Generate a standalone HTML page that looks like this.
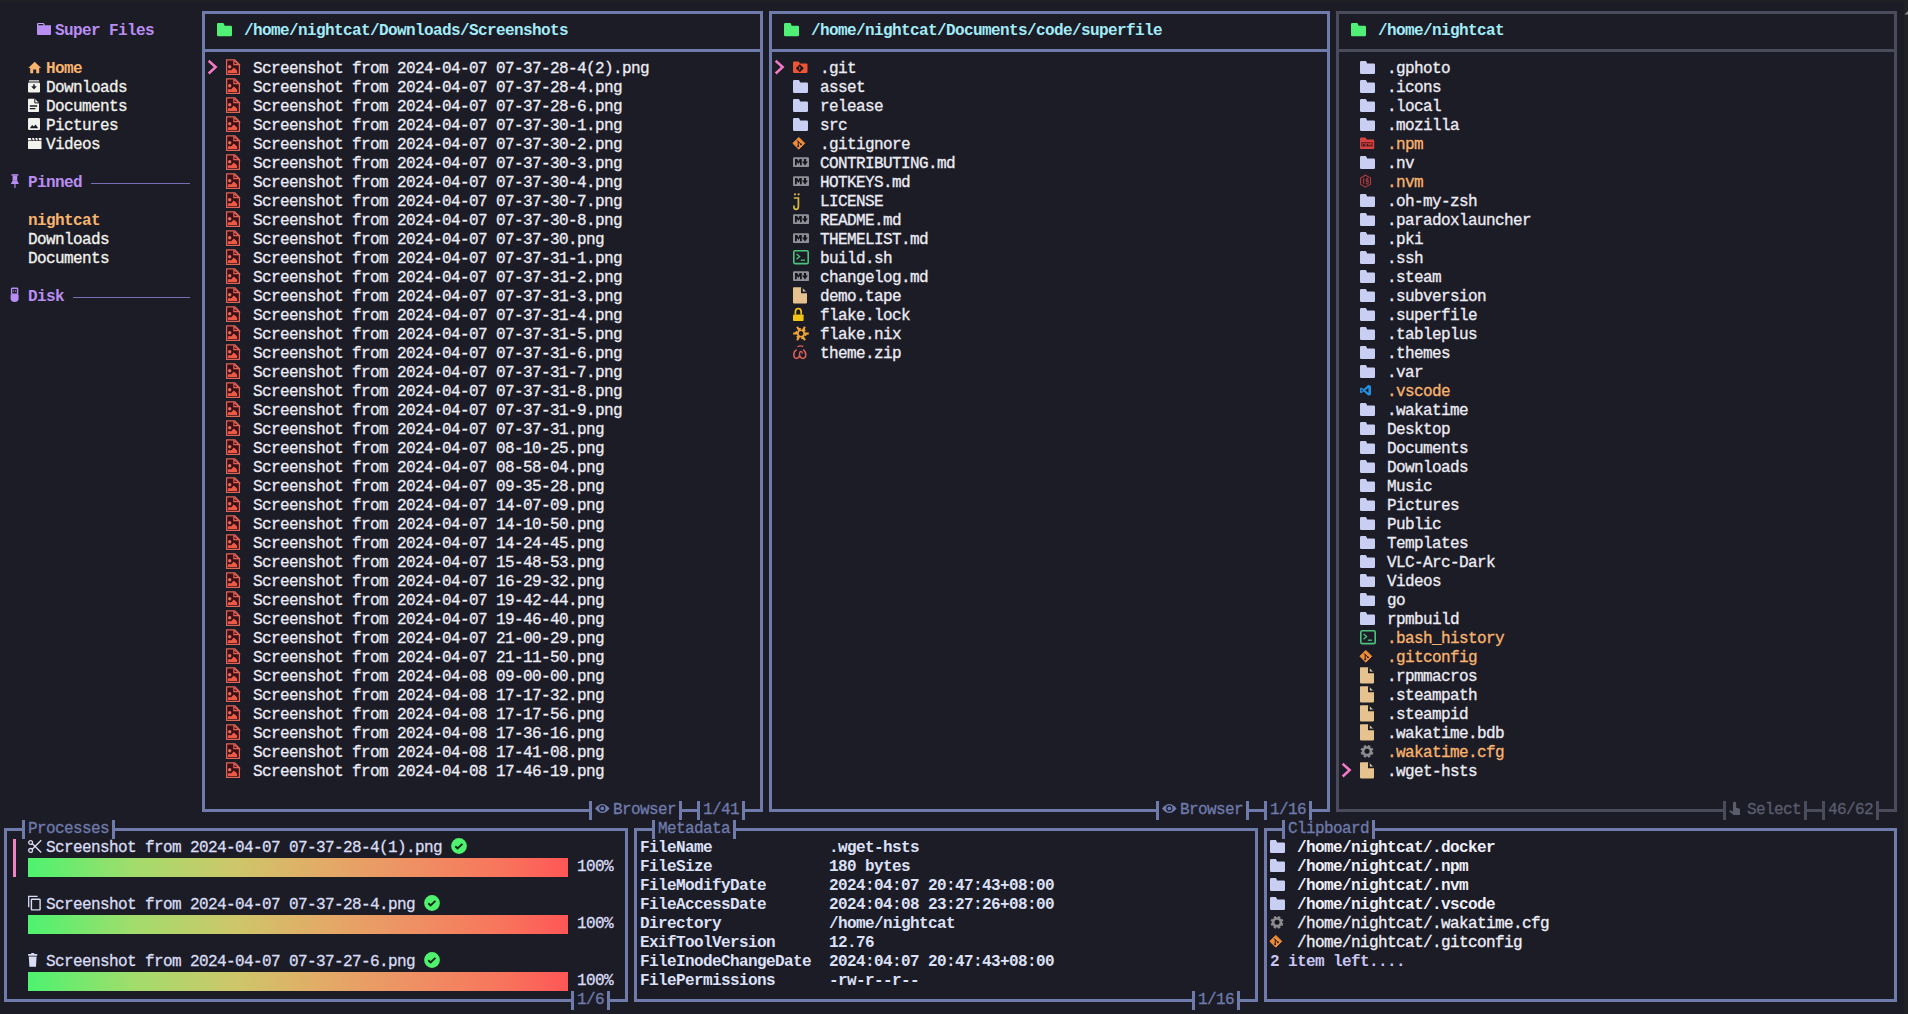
<!DOCTYPE html>
<html><head><meta charset="utf-8"><style>
html,body{margin:0;padding:0;}
body{width:1908px;height:1014px;background:#1c1c27;position:relative;overflow:hidden;}
.r{position:absolute;}
.t{position:absolute;white-space:pre;font-family:"Liberation Mono",monospace;font-size:16px;line-height:19px;letter-spacing:-0.6px;-webkit-text-stroke:0.3px currentColor;}
.i{position:absolute;overflow:visible;}
</style></head><body>
<div class="r" style="left:0px;top:0px;width:1908px;height:2px;background:#202024;"></div>
<div class="r" style="left:1904px;top:0px;width:4px;height:1014px;background:#202124;"></div>
<svg class="i" style="left:1904px;top:10px" width="4" height="5" viewBox="0 0 4 5"><path d="M0.5 4.5 L4 1 V4.5 Z" fill="#8a8a8a"/></svg>
<svg class="i" style="left:37px;top:22px" width="18" height="19" viewBox="0 0 18 19"><rect x="0.6" y="1.5" width="6.4" height="3" rx="1" fill="none" stroke="#c9a8f6" stroke-width="1.2"/><path d="M0 3.2 H14 V12.1 Q14 13.1 13 13.1 H1 Q0 13.1 0 12.1 Z" fill="#b98ef2"/></svg>
<div class="t" style="left:55px;top:22px;color:#b98ef2;font-weight:bold;-webkit-text-stroke:0;">Super Files</div>
<svg class="i" style="left:28px;top:60px" width="18" height="19" viewBox="0 0 18 19"><path d="M0.3 7.9 L6.7 1.8 L13.1 7.9 H11.2 V13.2 H8.2 V9.6 H5.2 V13.2 H2.2 V7.9 Z" fill="#f8b46e"/></svg>
<div class="t" style="left:46px;top:60px;color:#f8b46e;font-weight:bold;-webkit-text-stroke:0;">Home</div>
<svg class="i" style="left:28px;top:79px" width="18" height="19" viewBox="0 0 18 19"><rect x="0.8" y="1.3" width="10.4" height="1.3" rx="0.5" fill="#f2f2ec"/><rect x="0" y="3.4" width="12" height="10.2" rx="1.3" fill="#f2f2ec"/><path d="M3.2 7.2 H8.8 L6 10.6 Z" fill="#1b1b25"/><rect x="5.2" y="5.4" width="1.6" height="2.2" fill="#1b1b25"/></svg>
<div class="t" style="left:46px;top:79px;color:#f2f2ec;">Downloads</div>
<svg class="i" style="left:28px;top:98px" width="18" height="19" viewBox="0 0 18 19"><path d="M0 1.5 Q0 0.7 0.8 0.7 H6.8 L11 4.9 V13.2 Q11 14 10.2 14 H0.8 Q0 14 0 13.2 Z" fill="#f2f2ec"/><path d="M6.8 0.7 V4.9 H11" fill="none" stroke="#1b1b25" stroke-width="1"/><path d="M1.8 8 H9.2 M1.8 10.6 H7.4" stroke="#1b1b25" stroke-width="1.3"/></svg>
<div class="t" style="left:46px;top:98px;color:#f2f2ec;">Documents</div>
<svg class="i" style="left:28px;top:117px" width="18" height="19" viewBox="0 0 18 19"><rect x="0" y="1.1" width="12" height="11.9" rx="1.3" fill="#f2f2ec"/><path d="M1.8 11.2 L4.2 8 L5.8 9.6 L7.6 7.4 L10.2 11.2 Z" fill="#1b1b25"/></svg>
<div class="t" style="left:46px;top:117px;color:#f2f2ec;">Pictures</div>
<svg class="i" style="left:28px;top:136px" width="18" height="19" viewBox="0 0 18 19"><rect x="0" y="5" width="13.5" height="7.9" rx="0.6" fill="#f2f2ec"/><rect x="0" y="2" width="13.5" height="2.4" fill="#f2f2ec"/><path d="M3.2 1.6 L4.4 4.8 M6.4 1.6 L7.6 4.8 M9.6 1.6 L10.8 4.8" stroke="#1b1b25" stroke-width="1.1"/></svg>
<div class="t" style="left:46px;top:136px;color:#f2f2ec;">Videos</div>
<svg class="i" style="left:10px;top:174px" width="18" height="19" viewBox="0 0 18 19"><rect x="1.5" y="0.2" width="6.8" height="1.5" fill="#b98ef2"/><rect x="2.6" y="1.6" width="4.6" height="5" fill="#b98ef2"/><path d="M2.6 6.4 H7.2 L8.9 9.9 H0.9 Z" fill="#b98ef2"/><rect x="4.4" y="9.8" width="1.1" height="4.2" fill="#b98ef2"/></svg>
<div class="t" style="left:28px;top:174px;color:#b98ef2;font-weight:bold;-webkit-text-stroke:0;">Pinned</div>
<div class="r" style="left:91px;top:183px;width:99px;height:1px;background:#7a6db5;"></div>
<div class="t" style="left:28px;top:212px;color:#f8b46e;font-weight:bold;-webkit-text-stroke:0;">nightcat</div>
<div class="t" style="left:28px;top:231px;color:#f2f2ec;">Downloads</div>
<div class="t" style="left:28px;top:250px;color:#f2f2ec;">Documents</div>
<svg class="i" style="left:10px;top:288px" width="18" height="19" viewBox="0 0 18 19"><rect x="1.6" y="0.2" width="6" height="6" rx="0.6" fill="none" stroke="#b98ef2" stroke-width="1.4"/><rect x="3" y="2.4" width="1.2" height="1.2" fill="#b98ef2"/><rect x="5" y="2.4" width="1.2" height="1.2" fill="#b98ef2"/><path d="M0.6 6.4 H8.6 V10.6 Q8.6 14 4.6 14 Q0.6 14 0.6 10.6 Z" fill="#b98ef2"/></svg>
<div class="t" style="left:28px;top:288px;color:#b98ef2;font-weight:bold;-webkit-text-stroke:0;">Disk</div>
<div class="r" style="left:73px;top:297px;width:117px;height:1px;background:#7a6db5;"></div>
<div class="r" style="left:202px;top:11px;width:561px;height:3px;background:#6f7bab;"></div>
<div class="r" style="left:202px;top:809px;width:561px;height:3px;background:#6f7bab;"></div>
<div class="r" style="left:202px;top:11px;width:3px;height:801px;background:#6f7bab;"></div>
<div class="r" style="left:760px;top:11px;width:3px;height:801px;background:#6f7bab;"></div>
<div class="r" style="left:202px;top:49px;width:561px;height:3px;background:#6f7bab;"></div>
<svg class="i" style="left:217px;top:22px" width="18" height="19" viewBox="0 0 18 19"><path d="M0 2.2 Q0 1.0 1.2 1.0 H6.2 Q7.0 1.0 7.6 3.7 H13.8 Q15.0 3.7 15.0 4.9 V13.0 Q15.0 14.2 13.8 14.2 H1.2 Q0 14.2 0 13.0 Z" fill="#4ff075"/></svg>
<div class="t" style="left:244px;top:22px;color:#a3ecf7;font-weight:bold;-webkit-text-stroke:0;">/home/nightcat/Downloads/Screenshots</div>
<svg class="i" style="left:208px;top:60px" width="18" height="19" viewBox="0 0 18 19"><path d="M1.6 1.6 L7.6 7.1 L1.6 12.6" fill="none" stroke="#f478c4" stroke-width="2.6" stroke-linecap="square" stroke-linejoin="miter"/></svg>
<svg class="i" style="left:226px;top:60px" width="18" height="19" viewBox="0 0 18 19"><path d="M0.6 -0.2 H8.9 L13.4 4.6 V14.4 H0.6 Z" fill="#3a1016" stroke="#de6457" stroke-width="1.25" stroke-linejoin="miter"/><path d="M7.8 0.8 V4.6 H13.2 Z" fill="#5c0a0c" stroke="#de6457" stroke-width="1.1"/><circle cx="3.7" cy="6.7" r="1.7" fill="#e0705f"/><path d="M1.8 13.1 V10.4 L3.6 10.0 L5 10.6 L7.8 7.6 L11.1 10.6 V13.1 Z" fill="#ec5a45"/></svg>
<div class="t" style="left:253px;top:60px;color:#ececf4;">Screenshot from 2024-04-07 07-37-28-4(2).png</div>
<svg class="i" style="left:226px;top:79px" width="18" height="19" viewBox="0 0 18 19"><path d="M0.6 -0.2 H8.9 L13.4 4.6 V14.4 H0.6 Z" fill="#3a1016" stroke="#de6457" stroke-width="1.25" stroke-linejoin="miter"/><path d="M7.8 0.8 V4.6 H13.2 Z" fill="#5c0a0c" stroke="#de6457" stroke-width="1.1"/><circle cx="3.7" cy="6.7" r="1.7" fill="#e0705f"/><path d="M1.8 13.1 V10.4 L3.6 10.0 L5 10.6 L7.8 7.6 L11.1 10.6 V13.1 Z" fill="#ec5a45"/></svg>
<div class="t" style="left:253px;top:79px;color:#ececf4;">Screenshot from 2024-04-07 07-37-28-4.png</div>
<svg class="i" style="left:226px;top:98px" width="18" height="19" viewBox="0 0 18 19"><path d="M0.6 -0.2 H8.9 L13.4 4.6 V14.4 H0.6 Z" fill="#3a1016" stroke="#de6457" stroke-width="1.25" stroke-linejoin="miter"/><path d="M7.8 0.8 V4.6 H13.2 Z" fill="#5c0a0c" stroke="#de6457" stroke-width="1.1"/><circle cx="3.7" cy="6.7" r="1.7" fill="#e0705f"/><path d="M1.8 13.1 V10.4 L3.6 10.0 L5 10.6 L7.8 7.6 L11.1 10.6 V13.1 Z" fill="#ec5a45"/></svg>
<div class="t" style="left:253px;top:98px;color:#ececf4;">Screenshot from 2024-04-07 07-37-28-6.png</div>
<svg class="i" style="left:226px;top:117px" width="18" height="19" viewBox="0 0 18 19"><path d="M0.6 -0.2 H8.9 L13.4 4.6 V14.4 H0.6 Z" fill="#3a1016" stroke="#de6457" stroke-width="1.25" stroke-linejoin="miter"/><path d="M7.8 0.8 V4.6 H13.2 Z" fill="#5c0a0c" stroke="#de6457" stroke-width="1.1"/><circle cx="3.7" cy="6.7" r="1.7" fill="#e0705f"/><path d="M1.8 13.1 V10.4 L3.6 10.0 L5 10.6 L7.8 7.6 L11.1 10.6 V13.1 Z" fill="#ec5a45"/></svg>
<div class="t" style="left:253px;top:117px;color:#ececf4;">Screenshot from 2024-04-07 07-37-30-1.png</div>
<svg class="i" style="left:226px;top:136px" width="18" height="19" viewBox="0 0 18 19"><path d="M0.6 -0.2 H8.9 L13.4 4.6 V14.4 H0.6 Z" fill="#3a1016" stroke="#de6457" stroke-width="1.25" stroke-linejoin="miter"/><path d="M7.8 0.8 V4.6 H13.2 Z" fill="#5c0a0c" stroke="#de6457" stroke-width="1.1"/><circle cx="3.7" cy="6.7" r="1.7" fill="#e0705f"/><path d="M1.8 13.1 V10.4 L3.6 10.0 L5 10.6 L7.8 7.6 L11.1 10.6 V13.1 Z" fill="#ec5a45"/></svg>
<div class="t" style="left:253px;top:136px;color:#ececf4;">Screenshot from 2024-04-07 07-37-30-2.png</div>
<svg class="i" style="left:226px;top:155px" width="18" height="19" viewBox="0 0 18 19"><path d="M0.6 -0.2 H8.9 L13.4 4.6 V14.4 H0.6 Z" fill="#3a1016" stroke="#de6457" stroke-width="1.25" stroke-linejoin="miter"/><path d="M7.8 0.8 V4.6 H13.2 Z" fill="#5c0a0c" stroke="#de6457" stroke-width="1.1"/><circle cx="3.7" cy="6.7" r="1.7" fill="#e0705f"/><path d="M1.8 13.1 V10.4 L3.6 10.0 L5 10.6 L7.8 7.6 L11.1 10.6 V13.1 Z" fill="#ec5a45"/></svg>
<div class="t" style="left:253px;top:155px;color:#ececf4;">Screenshot from 2024-04-07 07-37-30-3.png</div>
<svg class="i" style="left:226px;top:174px" width="18" height="19" viewBox="0 0 18 19"><path d="M0.6 -0.2 H8.9 L13.4 4.6 V14.4 H0.6 Z" fill="#3a1016" stroke="#de6457" stroke-width="1.25" stroke-linejoin="miter"/><path d="M7.8 0.8 V4.6 H13.2 Z" fill="#5c0a0c" stroke="#de6457" stroke-width="1.1"/><circle cx="3.7" cy="6.7" r="1.7" fill="#e0705f"/><path d="M1.8 13.1 V10.4 L3.6 10.0 L5 10.6 L7.8 7.6 L11.1 10.6 V13.1 Z" fill="#ec5a45"/></svg>
<div class="t" style="left:253px;top:174px;color:#ececf4;">Screenshot from 2024-04-07 07-37-30-4.png</div>
<svg class="i" style="left:226px;top:193px" width="18" height="19" viewBox="0 0 18 19"><path d="M0.6 -0.2 H8.9 L13.4 4.6 V14.4 H0.6 Z" fill="#3a1016" stroke="#de6457" stroke-width="1.25" stroke-linejoin="miter"/><path d="M7.8 0.8 V4.6 H13.2 Z" fill="#5c0a0c" stroke="#de6457" stroke-width="1.1"/><circle cx="3.7" cy="6.7" r="1.7" fill="#e0705f"/><path d="M1.8 13.1 V10.4 L3.6 10.0 L5 10.6 L7.8 7.6 L11.1 10.6 V13.1 Z" fill="#ec5a45"/></svg>
<div class="t" style="left:253px;top:193px;color:#ececf4;">Screenshot from 2024-04-07 07-37-30-7.png</div>
<svg class="i" style="left:226px;top:212px" width="18" height="19" viewBox="0 0 18 19"><path d="M0.6 -0.2 H8.9 L13.4 4.6 V14.4 H0.6 Z" fill="#3a1016" stroke="#de6457" stroke-width="1.25" stroke-linejoin="miter"/><path d="M7.8 0.8 V4.6 H13.2 Z" fill="#5c0a0c" stroke="#de6457" stroke-width="1.1"/><circle cx="3.7" cy="6.7" r="1.7" fill="#e0705f"/><path d="M1.8 13.1 V10.4 L3.6 10.0 L5 10.6 L7.8 7.6 L11.1 10.6 V13.1 Z" fill="#ec5a45"/></svg>
<div class="t" style="left:253px;top:212px;color:#ececf4;">Screenshot from 2024-04-07 07-37-30-8.png</div>
<svg class="i" style="left:226px;top:231px" width="18" height="19" viewBox="0 0 18 19"><path d="M0.6 -0.2 H8.9 L13.4 4.6 V14.4 H0.6 Z" fill="#3a1016" stroke="#de6457" stroke-width="1.25" stroke-linejoin="miter"/><path d="M7.8 0.8 V4.6 H13.2 Z" fill="#5c0a0c" stroke="#de6457" stroke-width="1.1"/><circle cx="3.7" cy="6.7" r="1.7" fill="#e0705f"/><path d="M1.8 13.1 V10.4 L3.6 10.0 L5 10.6 L7.8 7.6 L11.1 10.6 V13.1 Z" fill="#ec5a45"/></svg>
<div class="t" style="left:253px;top:231px;color:#ececf4;">Screenshot from 2024-04-07 07-37-30.png</div>
<svg class="i" style="left:226px;top:250px" width="18" height="19" viewBox="0 0 18 19"><path d="M0.6 -0.2 H8.9 L13.4 4.6 V14.4 H0.6 Z" fill="#3a1016" stroke="#de6457" stroke-width="1.25" stroke-linejoin="miter"/><path d="M7.8 0.8 V4.6 H13.2 Z" fill="#5c0a0c" stroke="#de6457" stroke-width="1.1"/><circle cx="3.7" cy="6.7" r="1.7" fill="#e0705f"/><path d="M1.8 13.1 V10.4 L3.6 10.0 L5 10.6 L7.8 7.6 L11.1 10.6 V13.1 Z" fill="#ec5a45"/></svg>
<div class="t" style="left:253px;top:250px;color:#ececf4;">Screenshot from 2024-04-07 07-37-31-1.png</div>
<svg class="i" style="left:226px;top:269px" width="18" height="19" viewBox="0 0 18 19"><path d="M0.6 -0.2 H8.9 L13.4 4.6 V14.4 H0.6 Z" fill="#3a1016" stroke="#de6457" stroke-width="1.25" stroke-linejoin="miter"/><path d="M7.8 0.8 V4.6 H13.2 Z" fill="#5c0a0c" stroke="#de6457" stroke-width="1.1"/><circle cx="3.7" cy="6.7" r="1.7" fill="#e0705f"/><path d="M1.8 13.1 V10.4 L3.6 10.0 L5 10.6 L7.8 7.6 L11.1 10.6 V13.1 Z" fill="#ec5a45"/></svg>
<div class="t" style="left:253px;top:269px;color:#ececf4;">Screenshot from 2024-04-07 07-37-31-2.png</div>
<svg class="i" style="left:226px;top:288px" width="18" height="19" viewBox="0 0 18 19"><path d="M0.6 -0.2 H8.9 L13.4 4.6 V14.4 H0.6 Z" fill="#3a1016" stroke="#de6457" stroke-width="1.25" stroke-linejoin="miter"/><path d="M7.8 0.8 V4.6 H13.2 Z" fill="#5c0a0c" stroke="#de6457" stroke-width="1.1"/><circle cx="3.7" cy="6.7" r="1.7" fill="#e0705f"/><path d="M1.8 13.1 V10.4 L3.6 10.0 L5 10.6 L7.8 7.6 L11.1 10.6 V13.1 Z" fill="#ec5a45"/></svg>
<div class="t" style="left:253px;top:288px;color:#ececf4;">Screenshot from 2024-04-07 07-37-31-3.png</div>
<svg class="i" style="left:226px;top:307px" width="18" height="19" viewBox="0 0 18 19"><path d="M0.6 -0.2 H8.9 L13.4 4.6 V14.4 H0.6 Z" fill="#3a1016" stroke="#de6457" stroke-width="1.25" stroke-linejoin="miter"/><path d="M7.8 0.8 V4.6 H13.2 Z" fill="#5c0a0c" stroke="#de6457" stroke-width="1.1"/><circle cx="3.7" cy="6.7" r="1.7" fill="#e0705f"/><path d="M1.8 13.1 V10.4 L3.6 10.0 L5 10.6 L7.8 7.6 L11.1 10.6 V13.1 Z" fill="#ec5a45"/></svg>
<div class="t" style="left:253px;top:307px;color:#ececf4;">Screenshot from 2024-04-07 07-37-31-4.png</div>
<svg class="i" style="left:226px;top:326px" width="18" height="19" viewBox="0 0 18 19"><path d="M0.6 -0.2 H8.9 L13.4 4.6 V14.4 H0.6 Z" fill="#3a1016" stroke="#de6457" stroke-width="1.25" stroke-linejoin="miter"/><path d="M7.8 0.8 V4.6 H13.2 Z" fill="#5c0a0c" stroke="#de6457" stroke-width="1.1"/><circle cx="3.7" cy="6.7" r="1.7" fill="#e0705f"/><path d="M1.8 13.1 V10.4 L3.6 10.0 L5 10.6 L7.8 7.6 L11.1 10.6 V13.1 Z" fill="#ec5a45"/></svg>
<div class="t" style="left:253px;top:326px;color:#ececf4;">Screenshot from 2024-04-07 07-37-31-5.png</div>
<svg class="i" style="left:226px;top:345px" width="18" height="19" viewBox="0 0 18 19"><path d="M0.6 -0.2 H8.9 L13.4 4.6 V14.4 H0.6 Z" fill="#3a1016" stroke="#de6457" stroke-width="1.25" stroke-linejoin="miter"/><path d="M7.8 0.8 V4.6 H13.2 Z" fill="#5c0a0c" stroke="#de6457" stroke-width="1.1"/><circle cx="3.7" cy="6.7" r="1.7" fill="#e0705f"/><path d="M1.8 13.1 V10.4 L3.6 10.0 L5 10.6 L7.8 7.6 L11.1 10.6 V13.1 Z" fill="#ec5a45"/></svg>
<div class="t" style="left:253px;top:345px;color:#ececf4;">Screenshot from 2024-04-07 07-37-31-6.png</div>
<svg class="i" style="left:226px;top:364px" width="18" height="19" viewBox="0 0 18 19"><path d="M0.6 -0.2 H8.9 L13.4 4.6 V14.4 H0.6 Z" fill="#3a1016" stroke="#de6457" stroke-width="1.25" stroke-linejoin="miter"/><path d="M7.8 0.8 V4.6 H13.2 Z" fill="#5c0a0c" stroke="#de6457" stroke-width="1.1"/><circle cx="3.7" cy="6.7" r="1.7" fill="#e0705f"/><path d="M1.8 13.1 V10.4 L3.6 10.0 L5 10.6 L7.8 7.6 L11.1 10.6 V13.1 Z" fill="#ec5a45"/></svg>
<div class="t" style="left:253px;top:364px;color:#ececf4;">Screenshot from 2024-04-07 07-37-31-7.png</div>
<svg class="i" style="left:226px;top:383px" width="18" height="19" viewBox="0 0 18 19"><path d="M0.6 -0.2 H8.9 L13.4 4.6 V14.4 H0.6 Z" fill="#3a1016" stroke="#de6457" stroke-width="1.25" stroke-linejoin="miter"/><path d="M7.8 0.8 V4.6 H13.2 Z" fill="#5c0a0c" stroke="#de6457" stroke-width="1.1"/><circle cx="3.7" cy="6.7" r="1.7" fill="#e0705f"/><path d="M1.8 13.1 V10.4 L3.6 10.0 L5 10.6 L7.8 7.6 L11.1 10.6 V13.1 Z" fill="#ec5a45"/></svg>
<div class="t" style="left:253px;top:383px;color:#ececf4;">Screenshot from 2024-04-07 07-37-31-8.png</div>
<svg class="i" style="left:226px;top:402px" width="18" height="19" viewBox="0 0 18 19"><path d="M0.6 -0.2 H8.9 L13.4 4.6 V14.4 H0.6 Z" fill="#3a1016" stroke="#de6457" stroke-width="1.25" stroke-linejoin="miter"/><path d="M7.8 0.8 V4.6 H13.2 Z" fill="#5c0a0c" stroke="#de6457" stroke-width="1.1"/><circle cx="3.7" cy="6.7" r="1.7" fill="#e0705f"/><path d="M1.8 13.1 V10.4 L3.6 10.0 L5 10.6 L7.8 7.6 L11.1 10.6 V13.1 Z" fill="#ec5a45"/></svg>
<div class="t" style="left:253px;top:402px;color:#ececf4;">Screenshot from 2024-04-07 07-37-31-9.png</div>
<svg class="i" style="left:226px;top:421px" width="18" height="19" viewBox="0 0 18 19"><path d="M0.6 -0.2 H8.9 L13.4 4.6 V14.4 H0.6 Z" fill="#3a1016" stroke="#de6457" stroke-width="1.25" stroke-linejoin="miter"/><path d="M7.8 0.8 V4.6 H13.2 Z" fill="#5c0a0c" stroke="#de6457" stroke-width="1.1"/><circle cx="3.7" cy="6.7" r="1.7" fill="#e0705f"/><path d="M1.8 13.1 V10.4 L3.6 10.0 L5 10.6 L7.8 7.6 L11.1 10.6 V13.1 Z" fill="#ec5a45"/></svg>
<div class="t" style="left:253px;top:421px;color:#ececf4;">Screenshot from 2024-04-07 07-37-31.png</div>
<svg class="i" style="left:226px;top:440px" width="18" height="19" viewBox="0 0 18 19"><path d="M0.6 -0.2 H8.9 L13.4 4.6 V14.4 H0.6 Z" fill="#3a1016" stroke="#de6457" stroke-width="1.25" stroke-linejoin="miter"/><path d="M7.8 0.8 V4.6 H13.2 Z" fill="#5c0a0c" stroke="#de6457" stroke-width="1.1"/><circle cx="3.7" cy="6.7" r="1.7" fill="#e0705f"/><path d="M1.8 13.1 V10.4 L3.6 10.0 L5 10.6 L7.8 7.6 L11.1 10.6 V13.1 Z" fill="#ec5a45"/></svg>
<div class="t" style="left:253px;top:440px;color:#ececf4;">Screenshot from 2024-04-07 08-10-25.png</div>
<svg class="i" style="left:226px;top:459px" width="18" height="19" viewBox="0 0 18 19"><path d="M0.6 -0.2 H8.9 L13.4 4.6 V14.4 H0.6 Z" fill="#3a1016" stroke="#de6457" stroke-width="1.25" stroke-linejoin="miter"/><path d="M7.8 0.8 V4.6 H13.2 Z" fill="#5c0a0c" stroke="#de6457" stroke-width="1.1"/><circle cx="3.7" cy="6.7" r="1.7" fill="#e0705f"/><path d="M1.8 13.1 V10.4 L3.6 10.0 L5 10.6 L7.8 7.6 L11.1 10.6 V13.1 Z" fill="#ec5a45"/></svg>
<div class="t" style="left:253px;top:459px;color:#ececf4;">Screenshot from 2024-04-07 08-58-04.png</div>
<svg class="i" style="left:226px;top:478px" width="18" height="19" viewBox="0 0 18 19"><path d="M0.6 -0.2 H8.9 L13.4 4.6 V14.4 H0.6 Z" fill="#3a1016" stroke="#de6457" stroke-width="1.25" stroke-linejoin="miter"/><path d="M7.8 0.8 V4.6 H13.2 Z" fill="#5c0a0c" stroke="#de6457" stroke-width="1.1"/><circle cx="3.7" cy="6.7" r="1.7" fill="#e0705f"/><path d="M1.8 13.1 V10.4 L3.6 10.0 L5 10.6 L7.8 7.6 L11.1 10.6 V13.1 Z" fill="#ec5a45"/></svg>
<div class="t" style="left:253px;top:478px;color:#ececf4;">Screenshot from 2024-04-07 09-35-28.png</div>
<svg class="i" style="left:226px;top:497px" width="18" height="19" viewBox="0 0 18 19"><path d="M0.6 -0.2 H8.9 L13.4 4.6 V14.4 H0.6 Z" fill="#3a1016" stroke="#de6457" stroke-width="1.25" stroke-linejoin="miter"/><path d="M7.8 0.8 V4.6 H13.2 Z" fill="#5c0a0c" stroke="#de6457" stroke-width="1.1"/><circle cx="3.7" cy="6.7" r="1.7" fill="#e0705f"/><path d="M1.8 13.1 V10.4 L3.6 10.0 L5 10.6 L7.8 7.6 L11.1 10.6 V13.1 Z" fill="#ec5a45"/></svg>
<div class="t" style="left:253px;top:497px;color:#ececf4;">Screenshot from 2024-04-07 14-07-09.png</div>
<svg class="i" style="left:226px;top:516px" width="18" height="19" viewBox="0 0 18 19"><path d="M0.6 -0.2 H8.9 L13.4 4.6 V14.4 H0.6 Z" fill="#3a1016" stroke="#de6457" stroke-width="1.25" stroke-linejoin="miter"/><path d="M7.8 0.8 V4.6 H13.2 Z" fill="#5c0a0c" stroke="#de6457" stroke-width="1.1"/><circle cx="3.7" cy="6.7" r="1.7" fill="#e0705f"/><path d="M1.8 13.1 V10.4 L3.6 10.0 L5 10.6 L7.8 7.6 L11.1 10.6 V13.1 Z" fill="#ec5a45"/></svg>
<div class="t" style="left:253px;top:516px;color:#ececf4;">Screenshot from 2024-04-07 14-10-50.png</div>
<svg class="i" style="left:226px;top:535px" width="18" height="19" viewBox="0 0 18 19"><path d="M0.6 -0.2 H8.9 L13.4 4.6 V14.4 H0.6 Z" fill="#3a1016" stroke="#de6457" stroke-width="1.25" stroke-linejoin="miter"/><path d="M7.8 0.8 V4.6 H13.2 Z" fill="#5c0a0c" stroke="#de6457" stroke-width="1.1"/><circle cx="3.7" cy="6.7" r="1.7" fill="#e0705f"/><path d="M1.8 13.1 V10.4 L3.6 10.0 L5 10.6 L7.8 7.6 L11.1 10.6 V13.1 Z" fill="#ec5a45"/></svg>
<div class="t" style="left:253px;top:535px;color:#ececf4;">Screenshot from 2024-04-07 14-24-45.png</div>
<svg class="i" style="left:226px;top:554px" width="18" height="19" viewBox="0 0 18 19"><path d="M0.6 -0.2 H8.9 L13.4 4.6 V14.4 H0.6 Z" fill="#3a1016" stroke="#de6457" stroke-width="1.25" stroke-linejoin="miter"/><path d="M7.8 0.8 V4.6 H13.2 Z" fill="#5c0a0c" stroke="#de6457" stroke-width="1.1"/><circle cx="3.7" cy="6.7" r="1.7" fill="#e0705f"/><path d="M1.8 13.1 V10.4 L3.6 10.0 L5 10.6 L7.8 7.6 L11.1 10.6 V13.1 Z" fill="#ec5a45"/></svg>
<div class="t" style="left:253px;top:554px;color:#ececf4;">Screenshot from 2024-04-07 15-48-53.png</div>
<svg class="i" style="left:226px;top:573px" width="18" height="19" viewBox="0 0 18 19"><path d="M0.6 -0.2 H8.9 L13.4 4.6 V14.4 H0.6 Z" fill="#3a1016" stroke="#de6457" stroke-width="1.25" stroke-linejoin="miter"/><path d="M7.8 0.8 V4.6 H13.2 Z" fill="#5c0a0c" stroke="#de6457" stroke-width="1.1"/><circle cx="3.7" cy="6.7" r="1.7" fill="#e0705f"/><path d="M1.8 13.1 V10.4 L3.6 10.0 L5 10.6 L7.8 7.6 L11.1 10.6 V13.1 Z" fill="#ec5a45"/></svg>
<div class="t" style="left:253px;top:573px;color:#ececf4;">Screenshot from 2024-04-07 16-29-32.png</div>
<svg class="i" style="left:226px;top:592px" width="18" height="19" viewBox="0 0 18 19"><path d="M0.6 -0.2 H8.9 L13.4 4.6 V14.4 H0.6 Z" fill="#3a1016" stroke="#de6457" stroke-width="1.25" stroke-linejoin="miter"/><path d="M7.8 0.8 V4.6 H13.2 Z" fill="#5c0a0c" stroke="#de6457" stroke-width="1.1"/><circle cx="3.7" cy="6.7" r="1.7" fill="#e0705f"/><path d="M1.8 13.1 V10.4 L3.6 10.0 L5 10.6 L7.8 7.6 L11.1 10.6 V13.1 Z" fill="#ec5a45"/></svg>
<div class="t" style="left:253px;top:592px;color:#ececf4;">Screenshot from 2024-04-07 19-42-44.png</div>
<svg class="i" style="left:226px;top:611px" width="18" height="19" viewBox="0 0 18 19"><path d="M0.6 -0.2 H8.9 L13.4 4.6 V14.4 H0.6 Z" fill="#3a1016" stroke="#de6457" stroke-width="1.25" stroke-linejoin="miter"/><path d="M7.8 0.8 V4.6 H13.2 Z" fill="#5c0a0c" stroke="#de6457" stroke-width="1.1"/><circle cx="3.7" cy="6.7" r="1.7" fill="#e0705f"/><path d="M1.8 13.1 V10.4 L3.6 10.0 L5 10.6 L7.8 7.6 L11.1 10.6 V13.1 Z" fill="#ec5a45"/></svg>
<div class="t" style="left:253px;top:611px;color:#ececf4;">Screenshot from 2024-04-07 19-46-40.png</div>
<svg class="i" style="left:226px;top:630px" width="18" height="19" viewBox="0 0 18 19"><path d="M0.6 -0.2 H8.9 L13.4 4.6 V14.4 H0.6 Z" fill="#3a1016" stroke="#de6457" stroke-width="1.25" stroke-linejoin="miter"/><path d="M7.8 0.8 V4.6 H13.2 Z" fill="#5c0a0c" stroke="#de6457" stroke-width="1.1"/><circle cx="3.7" cy="6.7" r="1.7" fill="#e0705f"/><path d="M1.8 13.1 V10.4 L3.6 10.0 L5 10.6 L7.8 7.6 L11.1 10.6 V13.1 Z" fill="#ec5a45"/></svg>
<div class="t" style="left:253px;top:630px;color:#ececf4;">Screenshot from 2024-04-07 21-00-29.png</div>
<svg class="i" style="left:226px;top:649px" width="18" height="19" viewBox="0 0 18 19"><path d="M0.6 -0.2 H8.9 L13.4 4.6 V14.4 H0.6 Z" fill="#3a1016" stroke="#de6457" stroke-width="1.25" stroke-linejoin="miter"/><path d="M7.8 0.8 V4.6 H13.2 Z" fill="#5c0a0c" stroke="#de6457" stroke-width="1.1"/><circle cx="3.7" cy="6.7" r="1.7" fill="#e0705f"/><path d="M1.8 13.1 V10.4 L3.6 10.0 L5 10.6 L7.8 7.6 L11.1 10.6 V13.1 Z" fill="#ec5a45"/></svg>
<div class="t" style="left:253px;top:649px;color:#ececf4;">Screenshot from 2024-04-07 21-11-50.png</div>
<svg class="i" style="left:226px;top:668px" width="18" height="19" viewBox="0 0 18 19"><path d="M0.6 -0.2 H8.9 L13.4 4.6 V14.4 H0.6 Z" fill="#3a1016" stroke="#de6457" stroke-width="1.25" stroke-linejoin="miter"/><path d="M7.8 0.8 V4.6 H13.2 Z" fill="#5c0a0c" stroke="#de6457" stroke-width="1.1"/><circle cx="3.7" cy="6.7" r="1.7" fill="#e0705f"/><path d="M1.8 13.1 V10.4 L3.6 10.0 L5 10.6 L7.8 7.6 L11.1 10.6 V13.1 Z" fill="#ec5a45"/></svg>
<div class="t" style="left:253px;top:668px;color:#ececf4;">Screenshot from 2024-04-08 09-00-00.png</div>
<svg class="i" style="left:226px;top:687px" width="18" height="19" viewBox="0 0 18 19"><path d="M0.6 -0.2 H8.9 L13.4 4.6 V14.4 H0.6 Z" fill="#3a1016" stroke="#de6457" stroke-width="1.25" stroke-linejoin="miter"/><path d="M7.8 0.8 V4.6 H13.2 Z" fill="#5c0a0c" stroke="#de6457" stroke-width="1.1"/><circle cx="3.7" cy="6.7" r="1.7" fill="#e0705f"/><path d="M1.8 13.1 V10.4 L3.6 10.0 L5 10.6 L7.8 7.6 L11.1 10.6 V13.1 Z" fill="#ec5a45"/></svg>
<div class="t" style="left:253px;top:687px;color:#ececf4;">Screenshot from 2024-04-08 17-17-32.png</div>
<svg class="i" style="left:226px;top:706px" width="18" height="19" viewBox="0 0 18 19"><path d="M0.6 -0.2 H8.9 L13.4 4.6 V14.4 H0.6 Z" fill="#3a1016" stroke="#de6457" stroke-width="1.25" stroke-linejoin="miter"/><path d="M7.8 0.8 V4.6 H13.2 Z" fill="#5c0a0c" stroke="#de6457" stroke-width="1.1"/><circle cx="3.7" cy="6.7" r="1.7" fill="#e0705f"/><path d="M1.8 13.1 V10.4 L3.6 10.0 L5 10.6 L7.8 7.6 L11.1 10.6 V13.1 Z" fill="#ec5a45"/></svg>
<div class="t" style="left:253px;top:706px;color:#ececf4;">Screenshot from 2024-04-08 17-17-56.png</div>
<svg class="i" style="left:226px;top:725px" width="18" height="19" viewBox="0 0 18 19"><path d="M0.6 -0.2 H8.9 L13.4 4.6 V14.4 H0.6 Z" fill="#3a1016" stroke="#de6457" stroke-width="1.25" stroke-linejoin="miter"/><path d="M7.8 0.8 V4.6 H13.2 Z" fill="#5c0a0c" stroke="#de6457" stroke-width="1.1"/><circle cx="3.7" cy="6.7" r="1.7" fill="#e0705f"/><path d="M1.8 13.1 V10.4 L3.6 10.0 L5 10.6 L7.8 7.6 L11.1 10.6 V13.1 Z" fill="#ec5a45"/></svg>
<div class="t" style="left:253px;top:725px;color:#ececf4;">Screenshot from 2024-04-08 17-36-16.png</div>
<svg class="i" style="left:226px;top:744px" width="18" height="19" viewBox="0 0 18 19"><path d="M0.6 -0.2 H8.9 L13.4 4.6 V14.4 H0.6 Z" fill="#3a1016" stroke="#de6457" stroke-width="1.25" stroke-linejoin="miter"/><path d="M7.8 0.8 V4.6 H13.2 Z" fill="#5c0a0c" stroke="#de6457" stroke-width="1.1"/><circle cx="3.7" cy="6.7" r="1.7" fill="#e0705f"/><path d="M1.8 13.1 V10.4 L3.6 10.0 L5 10.6 L7.8 7.6 L11.1 10.6 V13.1 Z" fill="#ec5a45"/></svg>
<div class="t" style="left:253px;top:744px;color:#ececf4;">Screenshot from 2024-04-08 17-41-08.png</div>
<svg class="i" style="left:226px;top:763px" width="18" height="19" viewBox="0 0 18 19"><path d="M0.6 -0.2 H8.9 L13.4 4.6 V14.4 H0.6 Z" fill="#3a1016" stroke="#de6457" stroke-width="1.25" stroke-linejoin="miter"/><path d="M7.8 0.8 V4.6 H13.2 Z" fill="#5c0a0c" stroke="#de6457" stroke-width="1.1"/><circle cx="3.7" cy="6.7" r="1.7" fill="#e0705f"/><path d="M1.8 13.1 V10.4 L3.6 10.0 L5 10.6 L7.8 7.6 L11.1 10.6 V13.1 Z" fill="#ec5a45"/></svg>
<div class="t" style="left:253px;top:763px;color:#ececf4;">Screenshot from 2024-04-08 17-46-19.png</div>
<div class="r" style="left:592px;top:808px;width:87px;height:5px;background:#1c1c27;"></div>
<div class="r" style="left:700px;top:808px;width:42px;height:5px;background:#1c1c27;"></div>
<div class="r" style="left:589px;top:801px;width:3px;height:19px;background:#6f7bab;"></div>
<div class="r" style="left:679px;top:801px;width:3px;height:19px;background:#6f7bab;"></div>
<div class="r" style="left:697px;top:801px;width:3px;height:19px;background:#6f7bab;"></div>
<div class="r" style="left:742px;top:801px;width:3px;height:19px;background:#6f7bab;"></div>
<div class="t" style="left:613px;top:801px;color:#6f7bab;">Browser</div>
<div class="t" style="left:703px;top:801px;color:#6f7bab;">1/41</div>
<svg class="i" style="left:595px;top:801px" width="18" height="19" viewBox="0 0 18 19"><path d="M0 7.4 Q7.3 -1.6 14.6 7.4 Q7.3 16.4 0 7.4 Z" fill="#6f7bab"/><circle cx="7.3" cy="7.4" r="3.1" fill="#15152a"/><circle cx="7.3" cy="7.4" r="1.9" fill="#6f7bab"/></svg>
<div class="r" style="left:769px;top:11px;width:561px;height:3px;background:#6f7bab;"></div>
<div class="r" style="left:769px;top:809px;width:561px;height:3px;background:#6f7bab;"></div>
<div class="r" style="left:769px;top:11px;width:3px;height:801px;background:#6f7bab;"></div>
<div class="r" style="left:1327px;top:11px;width:3px;height:801px;background:#6f7bab;"></div>
<div class="r" style="left:769px;top:49px;width:561px;height:3px;background:#6f7bab;"></div>
<svg class="i" style="left:784px;top:22px" width="18" height="19" viewBox="0 0 18 19"><path d="M0 2.2 Q0 1.0 1.2 1.0 H6.2 Q7.0 1.0 7.6 3.7 H13.8 Q15.0 3.7 15.0 4.9 V13.0 Q15.0 14.2 13.8 14.2 H1.2 Q0 14.2 0 13.0 Z" fill="#4ff075"/></svg>
<div class="t" style="left:811px;top:22px;color:#a3ecf7;font-weight:bold;-webkit-text-stroke:0;">/home/nightcat/Documents/code/superfile</div>
<svg class="i" style="left:775px;top:60px" width="18" height="19" viewBox="0 0 18 19"><path d="M1.6 1.6 L7.6 7.1 L1.6 12.6" fill="none" stroke="#f478c4" stroke-width="2.6" stroke-linecap="square" stroke-linejoin="miter"/></svg>
<svg class="i" style="left:793px;top:60px" width="18" height="19" viewBox="0 0 18 19"><path d="M0 2.7 Q0 1.5 1.2 1.5 H5.4 Q6.2 1.5 6.8 3.4 H13.3 Q14.5 3.4 14.5 4.6 V11.8 Q14.5 13.0 13.3 13.0 H1.2 Q0 13.0 0 11.8 Z" fill="#ec5535"/><path d="M6.8 4.2 L10.8 8.2 L6.8 12.2 L2.8 8.2 Z" fill="#1c1414"/><path d="M5.8 6.4 L7.8 8.4 M6.6 7.2 V10.2" stroke="#ec5535" stroke-width="0.8"/></svg>
<div class="t" style="left:820px;top:60px;color:#ececf4;">.git</div>
<svg class="i" style="left:793px;top:79px" width="18" height="19" viewBox="0 0 18 19"><path d="M0 2.2 Q0 1.0 1.2 1.0 H5.7 Q6.5 1.0 7.1 3.6 H13.8 Q15.0 3.6 15.0 4.8 V12.8 Q15.0 14.0 13.8 14.0 H1.2 Q0 14.0 0 12.8 Z" fill="#c9cff3"/></svg>
<div class="t" style="left:820px;top:79px;color:#ececf4;">asset</div>
<svg class="i" style="left:793px;top:98px" width="18" height="19" viewBox="0 0 18 19"><path d="M0 2.2 Q0 1.0 1.2 1.0 H5.7 Q6.5 1.0 7.1 3.6 H13.8 Q15.0 3.6 15.0 4.8 V12.8 Q15.0 14.0 13.8 14.0 H1.2 Q0 14.0 0 12.8 Z" fill="#c9cff3"/></svg>
<div class="t" style="left:820px;top:98px;color:#ececf4;">release</div>
<svg class="i" style="left:793px;top:117px" width="18" height="19" viewBox="0 0 18 19"><path d="M0 2.2 Q0 1.0 1.2 1.0 H5.7 Q6.5 1.0 7.1 3.6 H13.8 Q15.0 3.6 15.0 4.8 V12.8 Q15.0 14.0 13.8 14.0 H1.2 Q0 14.0 0 12.8 Z" fill="#c9cff3"/></svg>
<div class="t" style="left:820px;top:117px;color:#ececf4;">src</div>
<svg class="i" style="left:793px;top:136px" width="18" height="19" viewBox="0 0 18 19"><path d="M5.8 1.3999999999999995 L11.7 7.3 L5.8 13.2 L-0.10000000000000053 7.3 Z" fill="#f08d38" stroke="#f08d38" stroke-width="1" stroke-linejoin="round"/><path d="M4.0 4.3 L8.0 8.3" stroke="#1a1414" stroke-width="1"/><path d="M5.2 5.5 V10.5" stroke="#1a1414" stroke-width="1"/><circle cx="5.2" cy="10.3" r="0.9" fill="#1a1414"/><circle cx="8.0" cy="8.3" r="0.9" fill="#1a1414"/></svg>
<div class="t" style="left:820px;top:136px;color:#ececf4;">.gitignore</div>
<svg class="i" style="left:793px;top:155px" width="18" height="19" viewBox="0 0 18 19"><rect x="0" y="2.2" width="16" height="9.899999999999999" rx="1.2" fill="#8d9098"/><path d="M2.0 10.299999999999999 V4.0 H4.3 L5.4 6.4 L6.5 4.0 H8.8 V10.299999999999999 H7.0 V6.8 L5.4 9.0 L3.8 6.8 V10.299999999999999 Z" fill="#15151b"/><path d="M10.9 4.0 H13.1 V6.6000000000000005 H14.9 L12 10.5 L9.1 6.6000000000000005 H10.9 Z" fill="#15151b"/></svg>
<div class="t" style="left:820px;top:155px;color:#ececf4;">CONTRIBUTING.md</div>
<svg class="i" style="left:793px;top:174px" width="18" height="19" viewBox="0 0 18 19"><rect x="0" y="2.2" width="16" height="9.899999999999999" rx="1.2" fill="#8d9098"/><path d="M2.0 10.299999999999999 V4.0 H4.3 L5.4 6.4 L6.5 4.0 H8.8 V10.299999999999999 H7.0 V6.8 L5.4 9.0 L3.8 6.8 V10.299999999999999 Z" fill="#15151b"/><path d="M10.9 4.0 H13.1 V6.6000000000000005 H14.9 L12 10.5 L9.1 6.6000000000000005 H10.9 Z" fill="#15151b"/></svg>
<div class="t" style="left:820px;top:174px;color:#ececf4;">HOTKEYS.md</div>
<svg class="i" style="left:793px;top:193px" width="18" height="19" viewBox="0 0 18 19"><path d="M0.8 5.0 H5.4 V13.2 Q5.4 16.4 3.1 16.4 Q0.9 16.4 0.9 13.4 V12.4" fill="none" stroke="#d8b842" stroke-width="1.7"/><circle cx="2.0" cy="1.3" r="1.1" fill="#d8b842"/><circle cx="5.6" cy="1.3" r="1.1" fill="#d8b842"/></svg>
<div class="t" style="left:820px;top:193px;color:#ececf4;">LICENSE</div>
<svg class="i" style="left:793px;top:212px" width="18" height="19" viewBox="0 0 18 19"><rect x="0" y="2.2" width="16" height="9.899999999999999" rx="1.2" fill="#8d9098"/><path d="M2.0 10.299999999999999 V4.0 H4.3 L5.4 6.4 L6.5 4.0 H8.8 V10.299999999999999 H7.0 V6.8 L5.4 9.0 L3.8 6.8 V10.299999999999999 Z" fill="#15151b"/><path d="M10.9 4.0 H13.1 V6.6000000000000005 H14.9 L12 10.5 L9.1 6.6000000000000005 H10.9 Z" fill="#15151b"/></svg>
<div class="t" style="left:820px;top:212px;color:#ececf4;">README.md</div>
<svg class="i" style="left:793px;top:231px" width="18" height="19" viewBox="0 0 18 19"><rect x="0" y="2.2" width="16" height="9.899999999999999" rx="1.2" fill="#8d9098"/><path d="M2.0 10.299999999999999 V4.0 H4.3 L5.4 6.4 L6.5 4.0 H8.8 V10.299999999999999 H7.0 V6.8 L5.4 9.0 L3.8 6.8 V10.299999999999999 Z" fill="#15151b"/><path d="M10.9 4.0 H13.1 V6.6000000000000005 H14.9 L12 10.5 L9.1 6.6000000000000005 H10.9 Z" fill="#15151b"/></svg>
<div class="t" style="left:820px;top:231px;color:#ececf4;">THEMELIST.md</div>
<svg class="i" style="left:793px;top:250px" width="18" height="19" viewBox="0 0 18 19"><rect x="0.8" y="0.8" width="14.4" height="12.8" rx="1.4" fill="none" stroke="#4cc37c" stroke-width="1.6"/><path d="M3.6 4 L6.6 6.6 L3.6 9.2" fill="none" stroke="#4cc37c" stroke-width="1.3"/><path d="M7.8 10.2 H12" stroke="#4cc37c" stroke-width="1.3"/></svg>
<div class="t" style="left:820px;top:250px;color:#ececf4;">build.sh</div>
<svg class="i" style="left:793px;top:269px" width="18" height="19" viewBox="0 0 18 19"><rect x="0" y="2.2" width="16" height="9.899999999999999" rx="1.2" fill="#8d9098"/><path d="M2.0 10.299999999999999 V4.0 H4.3 L5.4 6.4 L6.5 4.0 H8.8 V10.299999999999999 H7.0 V6.8 L5.4 9.0 L3.8 6.8 V10.299999999999999 Z" fill="#15151b"/><path d="M10.9 4.0 H13.1 V6.6000000000000005 H14.9 L12 10.5 L9.1 6.6000000000000005 H10.9 Z" fill="#15151b"/></svg>
<div class="t" style="left:820px;top:269px;color:#ececf4;">changelog.md</div>
<svg class="i" style="left:793px;top:288px" width="18" height="19" viewBox="0 0 18 19"><path d="M0 0.0 Q0 -0.8 0.8 -0.8 H8.6 L14.0 4.6 V14.6 Q14.0 15.4 13.2 15.4 H0.8 Q0 15.4 0 14.6 Z" fill="#e6c38e"/><path d="M8.6 -0.8 V4.6 H14.0" fill="#1c1c27" stroke="#1c1c27" stroke-width="1.2"/><path d="M9.799999999999999 0.5999999999999999 L12.8 3.5999999999999996 H9.799999999999999 Z" fill="#d9cfb4"/></svg>
<div class="t" style="left:820px;top:288px;color:#ececf4;">demo.tape</div>
<svg class="i" style="left:793px;top:307px" width="18" height="19" viewBox="0 0 18 19"><path d="M2.4 7.6 V5.0 Q2.4 1.5 5.3 1.5 Q8.2 1.5 8.2 5.0 V7.6" fill="none" stroke="#f1c518" stroke-width="1.7"/><rect x="0" y="7.4" width="10.6" height="6.7" rx="0.8" fill="#f1c518"/></svg>
<div class="t" style="left:820px;top:307px;color:#ececf4;">flake.lock</div>
<svg class="i" style="left:793px;top:326px" width="18" height="19" viewBox="0 0 18 19"><line x1="10.60" y1="7.50" x2="15.80" y2="7.50" stroke="#eea535" stroke-width="2.1"/><line x1="13.40" y1="7.50" x2="12.10" y2="9.75" stroke="#eea535" stroke-width="1.7"/><line x1="9.30" y1="9.75" x2="11.90" y2="14.25" stroke="#eea535" stroke-width="2.1"/><line x1="10.70" y1="12.18" x2="8.10" y2="12.18" stroke="#eea535" stroke-width="1.7"/><line x1="6.70" y1="9.75" x2="4.10" y2="14.25" stroke="#eea535" stroke-width="2.1"/><line x1="5.30" y1="12.18" x2="4.00" y2="9.92" stroke="#eea535" stroke-width="1.7"/><line x1="5.40" y1="7.50" x2="0.20" y2="7.50" stroke="#eea535" stroke-width="2.1"/><line x1="2.60" y1="7.50" x2="3.90" y2="5.25" stroke="#eea535" stroke-width="1.7"/><line x1="6.70" y1="5.25" x2="4.10" y2="0.75" stroke="#eea535" stroke-width="2.1"/><line x1="5.30" y1="2.82" x2="7.90" y2="2.82" stroke="#eea535" stroke-width="1.7"/><line x1="9.30" y1="5.25" x2="11.90" y2="0.75" stroke="#eea535" stroke-width="2.1"/><line x1="10.70" y1="2.82" x2="12.00" y2="5.08" stroke="#eea535" stroke-width="1.7"/><circle cx="8.0" cy="7.5" r="3.2" fill="none" stroke="#eea535" stroke-width="1.6"/></svg>
<div class="t" style="left:820px;top:326px;color:#ececf4;">flake.nix</div>
<svg class="i" style="left:793px;top:345px" width="18" height="19" viewBox="0 0 18 19"><path d="M3.6 4.6 Q0.6 6.4 0.8 10.0 Q1.0 13.4 3.4 13.4 Q5.6 13.4 6.6 10.6 Q7.6 13.4 9.8 13.4 Q12.6 13.4 12.8 10.0 Q13.0 6.6 10.2 4.6" fill="none" stroke="#de5e58" stroke-width="1.5"/><path d="M6.6 10.4 Q6.2 6.6 7.8 6.4 Q9.4 6.4 9.0 8.6" fill="none" stroke="#de5e58" stroke-width="1.3"/><path d="M4.4 1.8 Q7.2 0.0 10.4 1.4" fill="none" stroke="#de5e58" stroke-width="1.3"/></svg>
<div class="t" style="left:820px;top:345px;color:#ececf4;">theme.zip</div>
<div class="r" style="left:1159px;top:808px;width:87px;height:5px;background:#1c1c27;"></div>
<div class="r" style="left:1267px;top:808px;width:42px;height:5px;background:#1c1c27;"></div>
<div class="r" style="left:1156px;top:801px;width:3px;height:19px;background:#6f7bab;"></div>
<div class="r" style="left:1246px;top:801px;width:3px;height:19px;background:#6f7bab;"></div>
<div class="r" style="left:1264px;top:801px;width:3px;height:19px;background:#6f7bab;"></div>
<div class="r" style="left:1309px;top:801px;width:3px;height:19px;background:#6f7bab;"></div>
<div class="t" style="left:1180px;top:801px;color:#6f7bab;">Browser</div>
<div class="t" style="left:1270px;top:801px;color:#6f7bab;">1/16</div>
<svg class="i" style="left:1162px;top:801px" width="18" height="19" viewBox="0 0 18 19"><path d="M0 7.4 Q7.3 -1.6 14.6 7.4 Q7.3 16.4 0 7.4 Z" fill="#6f7bab"/><circle cx="7.3" cy="7.4" r="3.1" fill="#15152a"/><circle cx="7.3" cy="7.4" r="1.9" fill="#6f7bab"/></svg>
<div class="r" style="left:1336px;top:11px;width:561px;height:3px;background:#4a4b5b;"></div>
<div class="r" style="left:1336px;top:809px;width:561px;height:3px;background:#4a4b5b;"></div>
<div class="r" style="left:1336px;top:11px;width:3px;height:801px;background:#4a4b5b;"></div>
<div class="r" style="left:1894px;top:11px;width:3px;height:801px;background:#4a4b5b;"></div>
<div class="r" style="left:1336px;top:49px;width:561px;height:3px;background:#4a4b5b;"></div>
<svg class="i" style="left:1351px;top:22px" width="18" height="19" viewBox="0 0 18 19"><path d="M0 2.2 Q0 1.0 1.2 1.0 H6.2 Q7.0 1.0 7.6 3.7 H13.8 Q15.0 3.7 15.0 4.9 V13.0 Q15.0 14.2 13.8 14.2 H1.2 Q0 14.2 0 13.0 Z" fill="#4ff075"/></svg>
<div class="t" style="left:1378px;top:22px;color:#a3ecf7;font-weight:bold;-webkit-text-stroke:0;">/home/nightcat</div>
<svg class="i" style="left:1360px;top:60px" width="18" height="19" viewBox="0 0 18 19"><path d="M0 2.2 Q0 1.0 1.2 1.0 H5.7 Q6.5 1.0 7.1 3.6 H13.8 Q15.0 3.6 15.0 4.8 V12.8 Q15.0 14.0 13.8 14.0 H1.2 Q0 14.0 0 12.8 Z" fill="#c9cff3"/></svg>
<div class="t" style="left:1387px;top:60px;color:#ececf4;">.gphoto</div>
<svg class="i" style="left:1360px;top:79px" width="18" height="19" viewBox="0 0 18 19"><path d="M0 2.2 Q0 1.0 1.2 1.0 H5.7 Q6.5 1.0 7.1 3.6 H13.8 Q15.0 3.6 15.0 4.8 V12.8 Q15.0 14.0 13.8 14.0 H1.2 Q0 14.0 0 12.8 Z" fill="#c9cff3"/></svg>
<div class="t" style="left:1387px;top:79px;color:#ececf4;">.icons</div>
<svg class="i" style="left:1360px;top:98px" width="18" height="19" viewBox="0 0 18 19"><path d="M0 2.2 Q0 1.0 1.2 1.0 H5.7 Q6.5 1.0 7.1 3.6 H13.8 Q15.0 3.6 15.0 4.8 V12.8 Q15.0 14.0 13.8 14.0 H1.2 Q0 14.0 0 12.8 Z" fill="#c9cff3"/></svg>
<div class="t" style="left:1387px;top:98px;color:#ececf4;">.local</div>
<svg class="i" style="left:1360px;top:117px" width="18" height="19" viewBox="0 0 18 19"><path d="M0 2.2 Q0 1.0 1.2 1.0 H5.7 Q6.5 1.0 7.1 3.6 H13.8 Q15.0 3.6 15.0 4.8 V12.8 Q15.0 14.0 13.8 14.0 H1.2 Q0 14.0 0 12.8 Z" fill="#c9cff3"/></svg>
<div class="t" style="left:1387px;top:117px;color:#ececf4;">.mozilla</div>
<svg class="i" style="left:1360px;top:136px" width="18" height="19" viewBox="0 0 18 19"><path d="M0 2.8 Q0 1.6 1.2 1.6 H5.2 Q6.0 1.6 6.6 3.6 H13.0 Q14.2 3.6 14.2 4.8 V11.9 Q14.2 13.1 13.0 13.1 H1.2 Q0 13.1 0 11.9 Z" fill="#d84141"/><rect x="1.4" y="6.2" width="11.4" height="4.2" fill="#3b1518"/><path d="M2.6 9.6 V7.2 H5.2 V9.6 M6.2 10.8 V7.2 H8.6 V9.2 M9.6 9.6 V7.2 H12 V9.6 M10.8 7.2 V9.4" fill="none" stroke="#d84141" stroke-width="0.9"/></svg>
<div class="t" style="left:1387px;top:136px;color:#f8b46e;">.npm</div>
<svg class="i" style="left:1360px;top:155px" width="18" height="19" viewBox="0 0 18 19"><path d="M0 2.2 Q0 1.0 1.2 1.0 H5.7 Q6.5 1.0 7.1 3.6 H13.8 Q15.0 3.6 15.0 4.8 V12.8 Q15.0 14.0 13.8 14.0 H1.2 Q0 14.0 0 12.8 Z" fill="#c9cff3"/></svg>
<div class="t" style="left:1387px;top:155px;color:#ececf4;">.nv</div>
<svg class="i" style="left:1360px;top:174px" width="18" height="19" viewBox="0 0 18 19"><path d="M5.5 1.2 L10.5 4.0 V10.2 L5.5 13.2 L0.6 10.2 V4.0 Z" fill="none" stroke="#b33a3c" stroke-width="1.1"/><path d="M3.6 4.2 V9.8 M6.2 8.6 Q6.4 10.2 7.6 10.0 Q8.6 9.6 8.2 7.4 Q7.6 4 6.8 4.6 Q6 5 6.2 6.8 Q6.8 7.6 8.2 7.2" fill="none" stroke="#b33a3c" stroke-width="1.1"/></svg>
<div class="t" style="left:1387px;top:174px;color:#f8b46e;">.nvm</div>
<svg class="i" style="left:1360px;top:193px" width="18" height="19" viewBox="0 0 18 19"><path d="M0 2.2 Q0 1.0 1.2 1.0 H5.7 Q6.5 1.0 7.1 3.6 H13.8 Q15.0 3.6 15.0 4.8 V12.8 Q15.0 14.0 13.8 14.0 H1.2 Q0 14.0 0 12.8 Z" fill="#c9cff3"/></svg>
<div class="t" style="left:1387px;top:193px;color:#ececf4;">.oh-my-zsh</div>
<svg class="i" style="left:1360px;top:212px" width="18" height="19" viewBox="0 0 18 19"><path d="M0 2.2 Q0 1.0 1.2 1.0 H5.7 Q6.5 1.0 7.1 3.6 H13.8 Q15.0 3.6 15.0 4.8 V12.8 Q15.0 14.0 13.8 14.0 H1.2 Q0 14.0 0 12.8 Z" fill="#c9cff3"/></svg>
<div class="t" style="left:1387px;top:212px;color:#ececf4;">.paradoxlauncher</div>
<svg class="i" style="left:1360px;top:231px" width="18" height="19" viewBox="0 0 18 19"><path d="M0 2.2 Q0 1.0 1.2 1.0 H5.7 Q6.5 1.0 7.1 3.6 H13.8 Q15.0 3.6 15.0 4.8 V12.8 Q15.0 14.0 13.8 14.0 H1.2 Q0 14.0 0 12.8 Z" fill="#c9cff3"/></svg>
<div class="t" style="left:1387px;top:231px;color:#ececf4;">.pki</div>
<svg class="i" style="left:1360px;top:250px" width="18" height="19" viewBox="0 0 18 19"><path d="M0 2.2 Q0 1.0 1.2 1.0 H5.7 Q6.5 1.0 7.1 3.6 H13.8 Q15.0 3.6 15.0 4.8 V12.8 Q15.0 14.0 13.8 14.0 H1.2 Q0 14.0 0 12.8 Z" fill="#c9cff3"/></svg>
<div class="t" style="left:1387px;top:250px;color:#ececf4;">.ssh</div>
<svg class="i" style="left:1360px;top:269px" width="18" height="19" viewBox="0 0 18 19"><path d="M0 2.2 Q0 1.0 1.2 1.0 H5.7 Q6.5 1.0 7.1 3.6 H13.8 Q15.0 3.6 15.0 4.8 V12.8 Q15.0 14.0 13.8 14.0 H1.2 Q0 14.0 0 12.8 Z" fill="#c9cff3"/></svg>
<div class="t" style="left:1387px;top:269px;color:#ececf4;">.steam</div>
<svg class="i" style="left:1360px;top:288px" width="18" height="19" viewBox="0 0 18 19"><path d="M0 2.2 Q0 1.0 1.2 1.0 H5.7 Q6.5 1.0 7.1 3.6 H13.8 Q15.0 3.6 15.0 4.8 V12.8 Q15.0 14.0 13.8 14.0 H1.2 Q0 14.0 0 12.8 Z" fill="#c9cff3"/></svg>
<div class="t" style="left:1387px;top:288px;color:#ececf4;">.subversion</div>
<svg class="i" style="left:1360px;top:307px" width="18" height="19" viewBox="0 0 18 19"><path d="M0 2.2 Q0 1.0 1.2 1.0 H5.7 Q6.5 1.0 7.1 3.6 H13.8 Q15.0 3.6 15.0 4.8 V12.8 Q15.0 14.0 13.8 14.0 H1.2 Q0 14.0 0 12.8 Z" fill="#c9cff3"/></svg>
<div class="t" style="left:1387px;top:307px;color:#ececf4;">.superfile</div>
<svg class="i" style="left:1360px;top:326px" width="18" height="19" viewBox="0 0 18 19"><path d="M0 2.2 Q0 1.0 1.2 1.0 H5.7 Q6.5 1.0 7.1 3.6 H13.8 Q15.0 3.6 15.0 4.8 V12.8 Q15.0 14.0 13.8 14.0 H1.2 Q0 14.0 0 12.8 Z" fill="#c9cff3"/></svg>
<div class="t" style="left:1387px;top:326px;color:#ececf4;">.tableplus</div>
<svg class="i" style="left:1360px;top:345px" width="18" height="19" viewBox="0 0 18 19"><path d="M0 2.2 Q0 1.0 1.2 1.0 H5.7 Q6.5 1.0 7.1 3.6 H13.8 Q15.0 3.6 15.0 4.8 V12.8 Q15.0 14.0 13.8 14.0 H1.2 Q0 14.0 0 12.8 Z" fill="#c9cff3"/></svg>
<div class="t" style="left:1387px;top:345px;color:#ececf4;">.themes</div>
<svg class="i" style="left:1360px;top:364px" width="18" height="19" viewBox="0 0 18 19"><path d="M0 2.2 Q0 1.0 1.2 1.0 H5.7 Q6.5 1.0 7.1 3.6 H13.8 Q15.0 3.6 15.0 4.8 V12.8 Q15.0 14.0 13.8 14.0 H1.2 Q0 14.0 0 12.8 Z" fill="#c9cff3"/></svg>
<div class="t" style="left:1387px;top:364px;color:#ececf4;">.var</div>
<svg class="i" style="left:1360px;top:383px" width="18" height="19" viewBox="0 0 18 19"><path d="M8.4 1.7 L11 2.9 V11.7 L8.4 12.8 L3.6 8.6 L1.4 10.3 L0 9.5 V5.2 L1.4 4.4 L3.6 6.1 Z M8.4 4.9 L5.2 7.35 L8.4 9.8 Z M1.5 6.0 V8.7 L3.0 7.35 Z" fill="#2290df" fill-rule="evenodd"/></svg>
<div class="t" style="left:1387px;top:383px;color:#f8b46e;">.vscode</div>
<svg class="i" style="left:1360px;top:402px" width="18" height="19" viewBox="0 0 18 19"><path d="M0 2.2 Q0 1.0 1.2 1.0 H5.7 Q6.5 1.0 7.1 3.6 H13.8 Q15.0 3.6 15.0 4.8 V12.8 Q15.0 14.0 13.8 14.0 H1.2 Q0 14.0 0 12.8 Z" fill="#c9cff3"/></svg>
<div class="t" style="left:1387px;top:402px;color:#ececf4;">.wakatime</div>
<svg class="i" style="left:1360px;top:421px" width="18" height="19" viewBox="0 0 18 19"><path d="M0 2.2 Q0 1.0 1.2 1.0 H5.7 Q6.5 1.0 7.1 3.6 H13.8 Q15.0 3.6 15.0 4.8 V12.8 Q15.0 14.0 13.8 14.0 H1.2 Q0 14.0 0 12.8 Z" fill="#c9cff3"/></svg>
<div class="t" style="left:1387px;top:421px;color:#ececf4;">Desktop</div>
<svg class="i" style="left:1360px;top:440px" width="18" height="19" viewBox="0 0 18 19"><path d="M0 2.2 Q0 1.0 1.2 1.0 H5.7 Q6.5 1.0 7.1 3.6 H13.8 Q15.0 3.6 15.0 4.8 V12.8 Q15.0 14.0 13.8 14.0 H1.2 Q0 14.0 0 12.8 Z" fill="#c9cff3"/></svg>
<div class="t" style="left:1387px;top:440px;color:#ececf4;">Documents</div>
<svg class="i" style="left:1360px;top:459px" width="18" height="19" viewBox="0 0 18 19"><path d="M0 2.2 Q0 1.0 1.2 1.0 H5.7 Q6.5 1.0 7.1 3.6 H13.8 Q15.0 3.6 15.0 4.8 V12.8 Q15.0 14.0 13.8 14.0 H1.2 Q0 14.0 0 12.8 Z" fill="#c9cff3"/></svg>
<div class="t" style="left:1387px;top:459px;color:#ececf4;">Downloads</div>
<svg class="i" style="left:1360px;top:478px" width="18" height="19" viewBox="0 0 18 19"><path d="M0 2.2 Q0 1.0 1.2 1.0 H5.7 Q6.5 1.0 7.1 3.6 H13.8 Q15.0 3.6 15.0 4.8 V12.8 Q15.0 14.0 13.8 14.0 H1.2 Q0 14.0 0 12.8 Z" fill="#c9cff3"/></svg>
<div class="t" style="left:1387px;top:478px;color:#ececf4;">Music</div>
<svg class="i" style="left:1360px;top:497px" width="18" height="19" viewBox="0 0 18 19"><path d="M0 2.2 Q0 1.0 1.2 1.0 H5.7 Q6.5 1.0 7.1 3.6 H13.8 Q15.0 3.6 15.0 4.8 V12.8 Q15.0 14.0 13.8 14.0 H1.2 Q0 14.0 0 12.8 Z" fill="#c9cff3"/></svg>
<div class="t" style="left:1387px;top:497px;color:#ececf4;">Pictures</div>
<svg class="i" style="left:1360px;top:516px" width="18" height="19" viewBox="0 0 18 19"><path d="M0 2.2 Q0 1.0 1.2 1.0 H5.7 Q6.5 1.0 7.1 3.6 H13.8 Q15.0 3.6 15.0 4.8 V12.8 Q15.0 14.0 13.8 14.0 H1.2 Q0 14.0 0 12.8 Z" fill="#c9cff3"/></svg>
<div class="t" style="left:1387px;top:516px;color:#ececf4;">Public</div>
<svg class="i" style="left:1360px;top:535px" width="18" height="19" viewBox="0 0 18 19"><path d="M0 2.2 Q0 1.0 1.2 1.0 H5.7 Q6.5 1.0 7.1 3.6 H13.8 Q15.0 3.6 15.0 4.8 V12.8 Q15.0 14.0 13.8 14.0 H1.2 Q0 14.0 0 12.8 Z" fill="#c9cff3"/></svg>
<div class="t" style="left:1387px;top:535px;color:#ececf4;">Templates</div>
<svg class="i" style="left:1360px;top:554px" width="18" height="19" viewBox="0 0 18 19"><path d="M0 2.2 Q0 1.0 1.2 1.0 H5.7 Q6.5 1.0 7.1 3.6 H13.8 Q15.0 3.6 15.0 4.8 V12.8 Q15.0 14.0 13.8 14.0 H1.2 Q0 14.0 0 12.8 Z" fill="#c9cff3"/></svg>
<div class="t" style="left:1387px;top:554px;color:#ececf4;">VLC-Arc-Dark</div>
<svg class="i" style="left:1360px;top:573px" width="18" height="19" viewBox="0 0 18 19"><path d="M0 2.2 Q0 1.0 1.2 1.0 H5.7 Q6.5 1.0 7.1 3.6 H13.8 Q15.0 3.6 15.0 4.8 V12.8 Q15.0 14.0 13.8 14.0 H1.2 Q0 14.0 0 12.8 Z" fill="#c9cff3"/></svg>
<div class="t" style="left:1387px;top:573px;color:#ececf4;">Videos</div>
<svg class="i" style="left:1360px;top:592px" width="18" height="19" viewBox="0 0 18 19"><path d="M0 2.2 Q0 1.0 1.2 1.0 H5.7 Q6.5 1.0 7.1 3.6 H13.8 Q15.0 3.6 15.0 4.8 V12.8 Q15.0 14.0 13.8 14.0 H1.2 Q0 14.0 0 12.8 Z" fill="#c9cff3"/></svg>
<div class="t" style="left:1387px;top:592px;color:#ececf4;">go</div>
<svg class="i" style="left:1360px;top:611px" width="18" height="19" viewBox="0 0 18 19"><path d="M0 2.2 Q0 1.0 1.2 1.0 H5.7 Q6.5 1.0 7.1 3.6 H13.8 Q15.0 3.6 15.0 4.8 V12.8 Q15.0 14.0 13.8 14.0 H1.2 Q0 14.0 0 12.8 Z" fill="#c9cff3"/></svg>
<div class="t" style="left:1387px;top:611px;color:#ececf4;">rpmbuild</div>
<svg class="i" style="left:1360px;top:630px" width="18" height="19" viewBox="0 0 18 19"><rect x="0.8" y="0.8" width="14.4" height="12.8" rx="1.4" fill="none" stroke="#4cc37c" stroke-width="1.6"/><path d="M3.6 4 L6.6 6.6 L3.6 9.2" fill="none" stroke="#4cc37c" stroke-width="1.3"/><path d="M7.8 10.2 H12" stroke="#4cc37c" stroke-width="1.3"/></svg>
<div class="t" style="left:1387px;top:630px;color:#f8b46e;">.bash_history</div>
<svg class="i" style="left:1360px;top:649px" width="18" height="19" viewBox="0 0 18 19"><path d="M5.8 1.3999999999999995 L11.7 7.3 L5.8 13.2 L-0.10000000000000053 7.3 Z" fill="#f08d38" stroke="#f08d38" stroke-width="1" stroke-linejoin="round"/><path d="M4.0 4.3 L8.0 8.3" stroke="#1a1414" stroke-width="1"/><path d="M5.2 5.5 V10.5" stroke="#1a1414" stroke-width="1"/><circle cx="5.2" cy="10.3" r="0.9" fill="#1a1414"/><circle cx="8.0" cy="8.3" r="0.9" fill="#1a1414"/></svg>
<div class="t" style="left:1387px;top:649px;color:#f8b46e;">.gitconfig</div>
<svg class="i" style="left:1360px;top:668px" width="18" height="19" viewBox="0 0 18 19"><path d="M0 0.0 Q0 -0.8 0.8 -0.8 H8.6 L14.0 4.6 V14.6 Q14.0 15.4 13.2 15.4 H0.8 Q0 15.4 0 14.6 Z" fill="#e6c38e"/><path d="M8.6 -0.8 V4.6 H14.0" fill="#1c1c27" stroke="#1c1c27" stroke-width="1.2"/><path d="M9.799999999999999 0.5999999999999999 L12.8 3.5999999999999996 H9.799999999999999 Z" fill="#d9cfb4"/></svg>
<div class="t" style="left:1387px;top:668px;color:#ececf4;">.rpmmacros</div>
<svg class="i" style="left:1360px;top:687px" width="18" height="19" viewBox="0 0 18 19"><path d="M0 0.0 Q0 -0.8 0.8 -0.8 H8.6 L14.0 4.6 V14.6 Q14.0 15.4 13.2 15.4 H0.8 Q0 15.4 0 14.6 Z" fill="#e6c38e"/><path d="M8.6 -0.8 V4.6 H14.0" fill="#1c1c27" stroke="#1c1c27" stroke-width="1.2"/><path d="M9.799999999999999 0.5999999999999999 L12.8 3.5999999999999996 H9.799999999999999 Z" fill="#d9cfb4"/></svg>
<div class="t" style="left:1387px;top:687px;color:#ececf4;">.steampath</div>
<svg class="i" style="left:1360px;top:706px" width="18" height="19" viewBox="0 0 18 19"><path d="M0 0.0 Q0 -0.8 0.8 -0.8 H8.6 L14.0 4.6 V14.6 Q14.0 15.4 13.2 15.4 H0.8 Q0 15.4 0 14.6 Z" fill="#e6c38e"/><path d="M8.6 -0.8 V4.6 H14.0" fill="#1c1c27" stroke="#1c1c27" stroke-width="1.2"/><path d="M9.799999999999999 0.5999999999999999 L12.8 3.5999999999999996 H9.799999999999999 Z" fill="#d9cfb4"/></svg>
<div class="t" style="left:1387px;top:706px;color:#ececf4;">.steampid</div>
<svg class="i" style="left:1360px;top:725px" width="18" height="19" viewBox="0 0 18 19"><path d="M0 0.0 Q0 -0.8 0.8 -0.8 H8.6 L14.0 4.6 V14.6 Q14.0 15.4 13.2 15.4 H0.8 Q0 15.4 0 14.6 Z" fill="#e6c38e"/><path d="M8.6 -0.8 V4.6 H14.0" fill="#1c1c27" stroke="#1c1c27" stroke-width="1.2"/><path d="M9.799999999999999 0.5999999999999999 L12.8 3.5999999999999996 H9.799999999999999 Z" fill="#d9cfb4"/></svg>
<div class="t" style="left:1387px;top:725px;color:#ececf4;">.wakatime.bdb</div>
<svg class="i" style="left:1360px;top:744px" width="18" height="19" viewBox="0 0 18 19"><line x1="7.0" y1="7.3" x2="12.91" y2="9.75" stroke="#8b8b90" stroke-width="2.6"/><line x1="7.0" y1="7.3" x2="9.45" y2="13.21" stroke="#8b8b90" stroke-width="2.6"/><line x1="7.0" y1="7.3" x2="4.55" y2="13.21" stroke="#8b8b90" stroke-width="2.6"/><line x1="7.0" y1="7.3" x2="1.09" y2="9.75" stroke="#8b8b90" stroke-width="2.6"/><line x1="7.0" y1="7.3" x2="1.09" y2="4.85" stroke="#8b8b90" stroke-width="2.6"/><line x1="7.0" y1="7.3" x2="4.55" y2="1.39" stroke="#8b8b90" stroke-width="2.6"/><line x1="7.0" y1="7.3" x2="9.45" y2="1.39" stroke="#8b8b90" stroke-width="2.6"/><line x1="7.0" y1="7.3" x2="12.91" y2="4.85" stroke="#8b8b90" stroke-width="2.6"/><circle cx="7.0" cy="7.3" r="5.1" fill="#8b8b90"/><circle cx="7.0" cy="7.3" r="2.5" fill="#16161c"/></svg>
<div class="t" style="left:1387px;top:744px;color:#f8b46e;">.wakatime.cfg</div>
<svg class="i" style="left:1342px;top:763px" width="18" height="19" viewBox="0 0 18 19"><path d="M1.6 1.6 L7.6 7.1 L1.6 12.6" fill="none" stroke="#f478c4" stroke-width="2.6" stroke-linecap="square" stroke-linejoin="miter"/></svg>
<svg class="i" style="left:1360px;top:763px" width="18" height="19" viewBox="0 0 18 19"><path d="M0 0.0 Q0 -0.8 0.8 -0.8 H8.6 L14.0 4.6 V14.6 Q14.0 15.4 13.2 15.4 H0.8 Q0 15.4 0 14.6 Z" fill="#e6c38e"/><path d="M8.6 -0.8 V4.6 H14.0" fill="#1c1c27" stroke="#1c1c27" stroke-width="1.2"/><path d="M9.799999999999999 0.5999999999999999 L12.8 3.5999999999999996 H9.799999999999999 Z" fill="#d9cfb4"/></svg>
<div class="t" style="left:1387px;top:763px;color:#ececf4;">.wget-hsts</div>
<div class="r" style="left:1726px;top:808px;width:78px;height:5px;background:#1c1c27;"></div>
<div class="r" style="left:1825px;top:808px;width:51px;height:5px;background:#1c1c27;"></div>
<div class="r" style="left:1723px;top:801px;width:3px;height:19px;background:#4a4b5b;"></div>
<div class="r" style="left:1804px;top:801px;width:3px;height:19px;background:#4a4b5b;"></div>
<div class="r" style="left:1822px;top:801px;width:3px;height:19px;background:#4a4b5b;"></div>
<div class="r" style="left:1876px;top:801px;width:3px;height:19px;background:#4a4b5b;"></div>
<div class="t" style="left:1747px;top:801px;color:#5b5d6d;">Select</div>
<div class="t" style="left:1828px;top:801px;color:#5b5d6d;">46/62</div>
<svg class="i" style="left:1729px;top:801px" width="18" height="19" viewBox="0 0 18 19"><path d="M4 1.6 Q4 0.8 5.5 0.8 Q7.1 0.8 7.1 1.6 V6.8 L10.2 7.6 Q11 7.9 11 9 V14 H4.6 L0.4 10.4 Q0 9.6 1.2 9.6 Q2.4 9.6 4 10.8 Z" fill="#5b5d6d"/></svg>
<div class="r" style="left:4px;top:828px;width:624px;height:3px;background:#6f7bab;"></div>
<div class="r" style="left:4px;top:999px;width:624px;height:3px;background:#6f7bab;"></div>
<div class="r" style="left:4px;top:828px;width:3px;height:174px;background:#6f7bab;"></div>
<div class="r" style="left:625px;top:828px;width:3px;height:174px;background:#6f7bab;"></div>
<div class="r" style="left:25px;top:827px;width:87px;height:5px;background:#1c1c27;"></div>
<div class="r" style="left:22px;top:820px;width:3px;height:19px;background:#6f7bab;"></div>
<div class="r" style="left:112px;top:820px;width:3px;height:19px;background:#6f7bab;"></div>
<div class="t" style="left:28px;top:820px;color:#6f7bab;">Processes</div>
<div class="r" style="left:574px;top:998px;width:33px;height:5px;background:#1c1c27;"></div>
<div class="r" style="left:571px;top:991px;width:3px;height:19px;background:#6f7bab;"></div>
<div class="r" style="left:607px;top:991px;width:3px;height:19px;background:#6f7bab;"></div>
<div class="t" style="left:577px;top:991px;color:#6f7bab;">1/6</div>
<div class="r" style="left:634px;top:828px;width:624px;height:3px;background:#6f7bab;"></div>
<div class="r" style="left:634px;top:999px;width:624px;height:3px;background:#6f7bab;"></div>
<div class="r" style="left:634px;top:828px;width:3px;height:174px;background:#6f7bab;"></div>
<div class="r" style="left:1255px;top:828px;width:3px;height:174px;background:#6f7bab;"></div>
<div class="r" style="left:655px;top:827px;width:78px;height:5px;background:#1c1c27;"></div>
<div class="r" style="left:652px;top:820px;width:3px;height:19px;background:#6f7bab;"></div>
<div class="r" style="left:733px;top:820px;width:3px;height:19px;background:#6f7bab;"></div>
<div class="t" style="left:658px;top:820px;color:#6f7bab;">Metadata</div>
<div class="r" style="left:1195px;top:998px;width:42px;height:5px;background:#1c1c27;"></div>
<div class="r" style="left:1192px;top:991px;width:3px;height:19px;background:#6f7bab;"></div>
<div class="r" style="left:1237px;top:991px;width:3px;height:19px;background:#6f7bab;"></div>
<div class="t" style="left:1198px;top:991px;color:#6f7bab;">1/16</div>
<div class="r" style="left:1264px;top:828px;width:633px;height:3px;background:#6f7bab;"></div>
<div class="r" style="left:1264px;top:999px;width:633px;height:3px;background:#6f7bab;"></div>
<div class="r" style="left:1264px;top:828px;width:3px;height:174px;background:#6f7bab;"></div>
<div class="r" style="left:1894px;top:828px;width:3px;height:174px;background:#6f7bab;"></div>
<div class="r" style="left:1285px;top:827px;width:87px;height:5px;background:#1c1c27;"></div>
<div class="r" style="left:1282px;top:820px;width:3px;height:19px;background:#6f7bab;"></div>
<div class="r" style="left:1372px;top:820px;width:3px;height:19px;background:#6f7bab;"></div>
<div class="t" style="left:1288px;top:820px;color:#6f7bab;">Clipboard</div>
<div class="r" style="left:13px;top:839px;width:3px;height:38px;background:#f381c6;"></div>
<svg class="i" style="left:28px;top:839px" width="18" height="19" viewBox="0 0 18 19"><circle cx="2.6" cy="3.5" r="1.9" fill="none" stroke="#d9dcf2" stroke-width="1.3"/><circle cx="2.6" cy="11.4" r="1.9" fill="none" stroke="#d9dcf2" stroke-width="1.3"/><path d="M4.2 4.6 L13.2 13.6 M4.2 10.3 L13.2 1.2" stroke="#d9dcf2" stroke-width="1.4"/></svg>
<div class="t" style="left:46px;top:839px;color:#d9dcf2;">Screenshot from 2024-04-07 07-37-28-4(1).png</div>
<svg class="i" style="left:451px;top:839px" width="18" height="19" viewBox="0 0 18 19"><circle cx="8" cy="7" r="7.9" fill="#4ff26e"/><path d="M4.3 7.2 L6.6 9.4 L11.4 4.9" fill="none" stroke="#0e2414" stroke-width="1.9"/></svg>
<div class="r" style="left:28px;top:858px;width:540px;height:19px;background:;background:linear-gradient(90deg,#4cf36f 0%,#a3dc6c 20%,#cdc76a 38%,#e3aa67 55%,#ef8f63 72%,#f8745c 88%,#ff5656 100%);"></div>
<div class="t" style="left:577px;top:858px;color:#d9dcf2;">100%</div>
<svg class="i" style="left:28px;top:896px" width="18" height="19" viewBox="0 0 18 19"><path d="M0.7 11.2 V0.3 H9.6" fill="none" stroke="#d9dcf2" stroke-width="1.3"/><rect x="3.4" y="3.3" width="8.7" height="10.6" rx="0.6" fill="none" stroke="#d9dcf2" stroke-width="1.4"/></svg>
<div class="t" style="left:46px;top:896px;color:#d9dcf2;">Screenshot from 2024-04-07 07-37-28-4.png</div>
<svg class="i" style="left:424px;top:896px" width="18" height="19" viewBox="0 0 18 19"><circle cx="8" cy="7" r="7.9" fill="#4ff26e"/><path d="M4.3 7.2 L6.6 9.4 L11.4 4.9" fill="none" stroke="#0e2414" stroke-width="1.9"/></svg>
<div class="r" style="left:28px;top:915px;width:540px;height:19px;background:;background:linear-gradient(90deg,#4cf36f 0%,#a3dc6c 20%,#cdc76a 38%,#e3aa67 55%,#ef8f63 72%,#f8745c 88%,#ff5656 100%);"></div>
<div class="t" style="left:577px;top:915px;color:#d9dcf2;">100%</div>
<svg class="i" style="left:28px;top:953px" width="18" height="19" viewBox="0 0 18 19"><rect x="0" y="1" width="9.4" height="1.7" rx="0.6" fill="#d9dcf2"/><rect x="3.2" y="0" width="3" height="1.4" fill="#d9dcf2"/><path d="M0.8 3.6 H8.6 L8 13.7 H1.4 Z" fill="#d9dcf2"/></svg>
<div class="t" style="left:46px;top:953px;color:#d9dcf2;">Screenshot from 2024-04-07 07-37-27-6.png</div>
<svg class="i" style="left:424px;top:953px" width="18" height="19" viewBox="0 0 18 19"><circle cx="8" cy="7" r="7.9" fill="#4ff26e"/><path d="M4.3 7.2 L6.6 9.4 L11.4 4.9" fill="none" stroke="#0e2414" stroke-width="1.9"/></svg>
<div class="r" style="left:28px;top:972px;width:540px;height:19px;background:;background:linear-gradient(90deg,#4cf36f 0%,#a3dc6c 20%,#cdc76a 38%,#e3aa67 55%,#ef8f63 72%,#f8745c 88%,#ff5656 100%);"></div>
<div class="t" style="left:577px;top:972px;color:#d9dcf2;">100%</div>
<div class="t" style="left:640px;top:839px;color:#dde1f7;font-weight:bold;-webkit-text-stroke:0;">FileName</div>
<div class="t" style="left:829px;top:839px;color:#dde1f7;font-weight:bold;-webkit-text-stroke:0;">.wget-hsts</div>
<div class="t" style="left:640px;top:858px;color:#dde1f7;font-weight:bold;-webkit-text-stroke:0;">FileSize</div>
<div class="t" style="left:829px;top:858px;color:#dde1f7;font-weight:bold;-webkit-text-stroke:0;">180 bytes</div>
<div class="t" style="left:640px;top:877px;color:#dde1f7;font-weight:bold;-webkit-text-stroke:0;">FileModifyDate</div>
<div class="t" style="left:829px;top:877px;color:#dde1f7;font-weight:bold;-webkit-text-stroke:0;">2024:04:07 20:47:43+08:00</div>
<div class="t" style="left:640px;top:896px;color:#dde1f7;font-weight:bold;-webkit-text-stroke:0;">FileAccessDate</div>
<div class="t" style="left:829px;top:896px;color:#dde1f7;font-weight:bold;-webkit-text-stroke:0;">2024:04:08 23:27:26+08:00</div>
<div class="t" style="left:640px;top:915px;color:#dde1f7;font-weight:bold;-webkit-text-stroke:0;">Directory</div>
<div class="t" style="left:829px;top:915px;color:#dde1f7;font-weight:bold;-webkit-text-stroke:0;">/home/nightcat</div>
<div class="t" style="left:640px;top:934px;color:#dde1f7;font-weight:bold;-webkit-text-stroke:0;">ExifToolVersion</div>
<div class="t" style="left:829px;top:934px;color:#dde1f7;font-weight:bold;-webkit-text-stroke:0;">12.76</div>
<div class="t" style="left:640px;top:953px;color:#dde1f7;font-weight:bold;-webkit-text-stroke:0;">FileInodeChangeDate</div>
<div class="t" style="left:829px;top:953px;color:#dde1f7;font-weight:bold;-webkit-text-stroke:0;">2024:04:07 20:47:43+08:00</div>
<div class="t" style="left:640px;top:972px;color:#dde1f7;font-weight:bold;-webkit-text-stroke:0;">FilePermissions</div>
<div class="t" style="left:829px;top:972px;color:#dde1f7;font-weight:bold;-webkit-text-stroke:0;">-rw-r--r--</div>
<svg class="i" style="left:1270px;top:839px" width="18" height="19" viewBox="0 0 18 19"><path d="M0 2.2 Q0 1.0 1.2 1.0 H5.7 Q6.5 1.0 7.1 3.6 H13.8 Q15.0 3.6 15.0 4.8 V12.8 Q15.0 14.0 13.8 14.0 H1.2 Q0 14.0 0 12.8 Z" fill="#c9cff3"/></svg>
<div class="t" style="left:1297px;top:839px;color:#f0f0f8;font-weight:bold;-webkit-text-stroke:0;">/home/nightcat/.docker</div>
<svg class="i" style="left:1270px;top:858px" width="18" height="19" viewBox="0 0 18 19"><path d="M0 2.2 Q0 1.0 1.2 1.0 H5.7 Q6.5 1.0 7.1 3.6 H13.8 Q15.0 3.6 15.0 4.8 V12.8 Q15.0 14.0 13.8 14.0 H1.2 Q0 14.0 0 12.8 Z" fill="#c9cff3"/></svg>
<div class="t" style="left:1297px;top:858px;color:#f0f0f8;font-weight:bold;-webkit-text-stroke:0;">/home/nightcat/.npm</div>
<svg class="i" style="left:1270px;top:877px" width="18" height="19" viewBox="0 0 18 19"><path d="M0 2.2 Q0 1.0 1.2 1.0 H5.7 Q6.5 1.0 7.1 3.6 H13.8 Q15.0 3.6 15.0 4.8 V12.8 Q15.0 14.0 13.8 14.0 H1.2 Q0 14.0 0 12.8 Z" fill="#c9cff3"/></svg>
<div class="t" style="left:1297px;top:877px;color:#f0f0f8;font-weight:bold;-webkit-text-stroke:0;">/home/nightcat/.nvm</div>
<svg class="i" style="left:1270px;top:896px" width="18" height="19" viewBox="0 0 18 19"><path d="M0 2.2 Q0 1.0 1.2 1.0 H5.7 Q6.5 1.0 7.1 3.6 H13.8 Q15.0 3.6 15.0 4.8 V12.8 Q15.0 14.0 13.8 14.0 H1.2 Q0 14.0 0 12.8 Z" fill="#c9cff3"/></svg>
<div class="t" style="left:1297px;top:896px;color:#f0f0f8;font-weight:bold;-webkit-text-stroke:0;">/home/nightcat/.vscode</div>
<svg class="i" style="left:1270px;top:915px" width="18" height="19" viewBox="0 0 18 19"><line x1="7.0" y1="7.3" x2="12.91" y2="9.75" stroke="#8b8b90" stroke-width="2.6"/><line x1="7.0" y1="7.3" x2="9.45" y2="13.21" stroke="#8b8b90" stroke-width="2.6"/><line x1="7.0" y1="7.3" x2="4.55" y2="13.21" stroke="#8b8b90" stroke-width="2.6"/><line x1="7.0" y1="7.3" x2="1.09" y2="9.75" stroke="#8b8b90" stroke-width="2.6"/><line x1="7.0" y1="7.3" x2="1.09" y2="4.85" stroke="#8b8b90" stroke-width="2.6"/><line x1="7.0" y1="7.3" x2="4.55" y2="1.39" stroke="#8b8b90" stroke-width="2.6"/><line x1="7.0" y1="7.3" x2="9.45" y2="1.39" stroke="#8b8b90" stroke-width="2.6"/><line x1="7.0" y1="7.3" x2="12.91" y2="4.85" stroke="#8b8b90" stroke-width="2.6"/><circle cx="7.0" cy="7.3" r="5.1" fill="#8b8b90"/><circle cx="7.0" cy="7.3" r="2.5" fill="#16161c"/></svg>
<div class="t" style="left:1297px;top:915px;color:#f0f0f8;">/home/nightcat/.wakatime.cfg</div>
<svg class="i" style="left:1270px;top:934px" width="18" height="19" viewBox="0 0 18 19"><path d="M5.8 1.3999999999999995 L11.7 7.3 L5.8 13.2 L-0.10000000000000053 7.3 Z" fill="#f08d38" stroke="#f08d38" stroke-width="1" stroke-linejoin="round"/><path d="M4.0 4.3 L8.0 8.3" stroke="#1a1414" stroke-width="1"/><path d="M5.2 5.5 V10.5" stroke="#1a1414" stroke-width="1"/><circle cx="5.2" cy="10.3" r="0.9" fill="#1a1414"/><circle cx="8.0" cy="8.3" r="0.9" fill="#1a1414"/></svg>
<div class="t" style="left:1297px;top:934px;color:#f0f0f8;">/home/nightcat/.gitconfig</div>
<div class="t" style="left:1270px;top:953px;color:#c9c6f0;font-weight:bold;-webkit-text-stroke:0;">2 item left....</div>
</body></html>
